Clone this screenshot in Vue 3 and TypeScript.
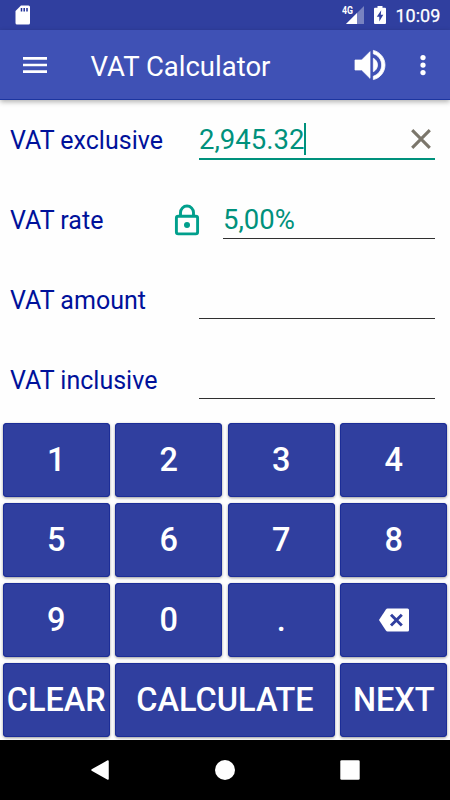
<script setup lang="ts">
import { ref } from 'vue'

interface Field { id: string; label: string; value: string; active?: boolean; locked?: boolean }
interface Key { label: string; wide?: boolean; erase?: boolean }

const fields = ref<Field[]>([
  { id: 'exclusive', label: 'VAT exclusive', value: '2,945.32', active: true },
  { id: 'rate', label: 'VAT rate', value: '5,00%', locked: true },
  { id: 'amount', label: 'VAT amount', value: '' },
  { id: 'inclusive', label: 'VAT inclusive', value: '' },
])

const keys: Key[] = [
  ...['1', '2', '3', '4', '5', '6', '7', '8', '9', '0', '.'].map((label) => ({ label })),
  { label: '', erase: true },
  { label: 'CLEAR' },
  { label: 'CALCULATE', wide: true },
  { label: 'NEXT' },
]
</script>

<template>
  <div class="screen">
    <div class="status">
      <svg class="sd" width="16" height="20" viewBox="0 0 16 20">
        <path d="M6 .5h7.500a1.500 1.500 0 0 1 1.500 1.500v16a1.500 1.500 0 0 1-1.500 1.500H2A1.500 1.500 0 0 1 .5 18V6z" fill="#fff" />
        <path d="M6.500 3v3.500M9.200 3v3.500M12 3v3.500" stroke="#1c2d97" stroke-width="1.500" />
      </svg>
      <div class="signal">
        <span class="net">4G</span>
        <svg width="18" height="18" viewBox="0 0 18 18">
          <path d="M18 0v18H0z" fill="#fff" fill-opacity=".35" />
          <path d="M11 7v11H0z" fill="#fff" />
        </svg>
      </div>
      <svg class="battery" width="12" height="18" viewBox="0 0 12 18">
        <path d="M3.500 0h5v1.800H11a1 1 0 0 1 1 1V17a1 1 0 0 1-1 1H1a1 1 0 0 1-1-1V2.800a1 1 0 0 1 1-1h2.500z" fill="#fff" />
        <path d="M7.200 4.200 2.800 10.800h2.500V15.500l4-6.700H6.800z" fill="#303f9f" />
      </svg>
      <span class="time">10:09</span>
    </div>

    <header class="toolbar">
      <svg class="menu" width="32" height="32" viewBox="0 0 24 24" fill="#fff">
        <path d="M3 18h18v-2H3v2zm0-5h18v-2H3v2zm0-7v2h18V6H3z" />
      </svg>
      <h1>VAT Calculator</h1>
      <svg class="volume" width="40" height="40" viewBox="0 0 24 24" fill="#fff">
        <path d="M3 9v6h4l5 5V4L7 9H3zm13.500 3c0-1.770-1.020-3.290-2.500-4.030v8.050c1.480-.73 2.500-2.250 2.500-4.020zM14 3.230v2.060c2.890.86 5 3.540 5 6.710s-2.110 5.850-5 6.710v2.060c4.010-.91 7-4.490 7-8.770s-2.990-7.860-7-8.770z" stroke="#fff" stroke-width=".45" stroke-linejoin="round" />
      </svg>
      <svg class="more" width="30" height="30" viewBox="0 0 24 24" fill="#fff">
        <circle cx="12" cy="6" r="2.100" /><circle cx="12" cy="12" r="2.100" /><circle cx="12" cy="18" r="2.100" />
      </svg>
    </header>

    <main class="form">
      <div v-for="f in fields" :key="f.id" class="row">
        <span class="label">{{ f.label }}</span>
        <svg v-if="f.locked" class="lock" width="26" height="32" viewBox="0 0 26 32" fill="none" stroke="#009f8c" stroke-width="2.900">
          <rect x="2.400" y="12.200" width="21.200" height="17.700" rx="1.800" />
          <path d="M6.500 12V8.500a6.500 6.500 0 0 1 13 0V12" />
          <circle cx="13" cy="21" r="3" fill="#009f8c" stroke="none" />
        </svg>
        <div class="field" :class="{ active: f.active, short: f.locked }">
          <span class="value">{{ f.value }}</span>
          <i v-if="f.active" class="caret"></i>
          <svg v-if="f.active" class="clear" width="20" height="20" viewBox="0 0 20 20">
            <path d="M1.200 1.200l17.600 17.600M18.800 1.200L1.200 18.800" stroke="#7b766b" stroke-width="3.100" />
          </svg>
        </div>
      </div>
    </main>

    <section class="pad">
      <button v-for="(k, i) in keys" :key="i" type="button" :class="{ wide: k.wide }">
        <svg v-if="k.erase" width="30" height="24" viewBox="0 0 30 24">
          <path d="M8.500.5h20a1.500 1.500 0 0 1 1.500 1.500v20a1.500 1.500 0 0 1-1.500 1.500h-20q-1 0-1.600-.9L0 12 6.900 1.400Q7.500.5 8.500.5z" fill="#fff" />
          <path d="M12 6.700l10.800 10.800M22.800 6.700L12 17.500" stroke="#303f9f" stroke-width="2.900" />
        </svg>
        <template v-else>{{ k.label }}</template>
      </button>
    </section>

    <nav class="nav">
      <svg width="20" height="20" viewBox="0 0 20 20"><path d="M18 1v18L2 10z" fill="#fff" stroke="#fff" stroke-width="1.500" stroke-linejoin="round" /></svg>
      <svg width="20" height="20" viewBox="0 0 20 20"><circle cx="10" cy="10" r="10" fill="#fff" /></svg>
      <svg width="20" height="20" viewBox="0 0 20 20"><rect x=".3" y=".3" width="19.400" height="19.400" rx="1.300" fill="#fff" /></svg>
    </nav>
  </div>
</template>

<style>
body { margin: 0; background: #fff; }
</style>

<style scoped>
.screen {
  width: 450px;
  height: 800px;
  display: flex;
  flex-direction: column;
  background: #fefefe;
  font-family: Roboto, "Liberation Sans", sans-serif;
  overflow: hidden;
}
svg { display: block; flex: none; }
.status {
  height: 30px;
  box-sizing: border-box;
  padding: 0 10px 0 15px;
  display: flex;
  align-items: center;
  background: #303f9f;
  color: #fff;
}
.signal {
  display: flex;
  align-items: flex-start;
  margin-left: auto;
}
.net {
  width: 4px;
  font-size: 11px;
  line-height: 9px;
  font-weight: 700;
  transform: scaleX(.8);
  transform-origin: left;
  white-space: nowrap;
}
.battery { margin-left: 10px; }
.time {
  width: 44.500px;
  margin: 1px 0 0 9.500px;
  font-size: 18px;
  line-height: 20px;
  font-weight: 400;
  -webkit-text-stroke: .25px #fff;
  white-space: nowrap;
}
.toolbar {
  height: 70px;
  box-sizing: border-box;
  padding: 0 12.500px 0 19px;
  display: flex;
  align-items: center;
  background: #3f51b5;
  border-bottom: 1px solid #1c35a0;
  box-shadow: 0 2px 5px rgba(0, 0, 0, .3);
  color: #fff;
}
h1 {
  margin: 4px 0 0 39.500px;
  font-size: 27.500px;
  line-height: 34px;
  font-weight: 400;
  white-space: nowrap;
}
.volume { margin-left: auto; }
.more { margin-left: 17.500px; }
.form { height: 320px; }
.row {
  height: 80px;
  box-sizing: border-box;
  padding: 0 15px 0 10px;
  display: flex;
  align-items: center;
}
.label {
  padding-top: 2px;
  color: #00119a;
  font-size: 25px;
  line-height: 30px;
  white-space: nowrap;
}
.lock { margin-left: auto; margin-right: 23px; }
.field {
  width: 236px;
  height: 38px;
  box-sizing: border-box;
  margin-left: auto;
  display: flex;
  align-items: center;
  border-bottom: 1px solid #303030;
  color: #00917c;
}
.field.short { width: 212px; margin-left: 0; }
.field.active { height: 40px; border-bottom: 2px solid #00917c; }
.value {
  padding-top: 2px;
  font-size: 27.500px;
  line-height: 36px;
  white-space: nowrap;
}
.field.short .value { padding-top: 0; }
.caret {
  width: 2px;
  height: 32px;
  background: #00917c;
}
.clear { margin-left: auto; margin-right: 4px; }
.pad {
  height: 320px;
  box-sizing: border-box;
  padding: 2.700px;
  display: grid;
  grid-template-columns: repeat(4, minmax(0, 1fr));
  grid-template-rows: repeat(4, minmax(0, 1fr));
  gap: 5.400px;
}
button {
  margin: 0;
  padding: 0;
  border: 0;
  border-radius: 4px;
  display: flex;
  align-items: center;
  justify-content: center;
  background: #303f9f;
  box-shadow: inset 0 0 0 1px #1c2d97, 0 1px 3px rgba(0, 0, 0, .4);
  color: #fff;
  font-family: inherit;
  font-size: 32.500px;
  font-weight: 500;
  line-height: 38px;
  white-space: nowrap;
}
button.wide { grid-column: span 2; }
.nav {
  height: 60px;
  box-sizing: border-box;
  padding: 0 90px;
  display: flex;
  align-items: center;
  justify-content: space-between;
  background: #000;
  position: relative;
}
</style>
